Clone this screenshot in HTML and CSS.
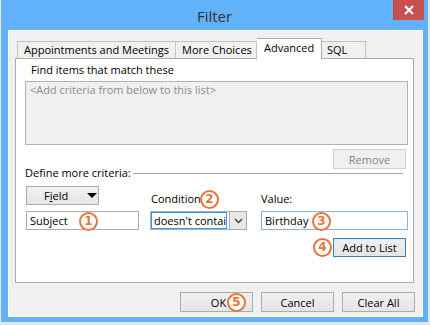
FILE: index.html
```html
<!DOCTYPE html>
<html lang="en">
<head>
    <meta charset="UTF-8">
    <title>Filter</title>
    <link rel="stylesheet" href="styles.css">
</head>
<body>
    <div class="window">
        <div class="titlebar">
            <span></span>
            <span class="title">Filter</span>
            <span class="close">
                <svg width="10" height="10" viewBox="0 0 10 10"><path d="M1 1 L9 9 M9 1 L1 9" stroke="#fff" stroke-width="2.2"/></svg>
            </span>
        </div>
        <div class="client">
            <div class="tabs">
                <div class="tab tab-appt">Appointments and Meetings</div>
                <div class="tab tab-more">More Choices</div>
                <div class="tab tab-adv active">Advanced</div>
                <div class="tab tab-sql">SQL</div>
            </div>
            <div class="panel">
                <div class="find-label">Find items that match these</div>
                <div class="criteria-list">
                    <span class="placeholder">&lt;Add criteria from below to this list&gt;</span>
                </div>
                <div class="remove-row">
                    <button class="btn disabled">Remove</button>
                </div>
                <div class="section-head">
                    <span>Define more criteria:</span>
                    <span class="rule"></span>
                </div>
                <div class="criteria-grid">
                    <button class="btn field-btn"><span>F<u>i</u>eld</span><span class="tri"></span></button>
                    <div class="label cond-label">Condition:<span class="step step-2">2</span></div>
                    <div class="label">Value:</div>

                    <div class="textbox subject">Subject<span class="step step-1">1</span></div>
                    <div class="combo">
                        <span class="combo-text">doesn't contai</span>
                        <span class="combo-btn">
                            <svg width="9" height="6" viewBox="0 0 9 6"><path d="M1 1 L4.5 4.5 L8 1" fill="none" stroke="#444" stroke-width="1.5"/></svg>
                        </span>
                    </div>
                    <div class="textbox value">Birthday<span class="step step-3">3</span></div>

                    <div class="add-cell">
                        <button class="btn default add-btn">Add to List<span class="step step-4">4</span></button>
                    </div>
                </div>
            </div>
            <div class="footer">
                <button class="btn ok-btn">OK<span class="step step-5">5</span></button>
                <button class="btn">Cancel</button>
                <button class="btn">Clear All</button>
            </div>
        </div>
    </div>
</body>
</html>
```

FILE: styles.css
```css
body {
    margin: 0;
    background: #e6e6e6;
    font-family: "Open Sans", "Noto Sans", sans-serif;
    font-size: 11px;
    color: #000;
}

.window {
    width: 427px;
    height: 322px;
    margin-left: 1px;
    padding: 0 5px 5px 7px;
    box-sizing: border-box;
    background: #62b1fb;
}

.titlebar {
    height: 30px;
    margin: 0 -5px 0 -7px;
    display: grid;
    grid-template-columns: 1fr auto 1fr;
    align-items: start;
}

.title {
    font-size: 15px;
    line-height: 32px;
    color: #333;
}

.close {
    justify-self: end;
    width: 31px;
    height: 20px;
    margin-right: 4px;
    background: #c75050;
    display: flex;
    align-items: center;
    justify-content: center;
}

.client {
    height: 287px;
    box-sizing: border-box;
    border: 1px solid #fbfdff;
    background: #f0f0f0;
    padding: 7px 0 0 6px;
}

/* tabs */
.tabs {
    display: flex;
    align-items: flex-end;
    height: 20px;
    padding-left: 2px;
}

.tab {
    height: 17px;
    box-sizing: border-box;
    border: 1px solid #c2c2c2;
    border-bottom: none;
    border-left: none;
    background: #f0f0f0;
    padding-left: 6px;
    line-height: 16px;
    white-space: nowrap;
}

.tab-appt { width: 159px; border-left: 1px solid #c2c2c2; }
.tab-more { width: 81px; }
.tab-adv { width: 65px; }
.tab-sql { width: 44px; padding-left: 5px; }

.tab.active {
    height: 21px;
    margin-bottom: -1px;
    background: #fff;
    border-color: #acacac;
    padding-left: 7px;
    line-height: 17px;
    position: relative;
}

/* panel */
.panel {
    width: 399px;
    height: 225px;
    box-sizing: border-box;
    border: 1px solid #acacac;
    background: #fff;
    padding: 3px 5px 0 9px;
}

.find-label {
    margin-left: 6px;
    line-height: 16px;
}

.criteria-list {
    height: 64px;
    margin-top: 3px;
    box-sizing: border-box;
    border: 1px solid #a7b5c6;
    background: #f0f0f0;
    padding: 1px 0 0 4px;
    line-height: 14px;
}

.placeholder {
    color: #8c8c8c;
}

.remove-row {
    display: flex;
    justify-content: flex-end;
    margin-top: 4px;
    padding-right: 2px;
}

.btn {
    width: 73px;
    height: 20px;
    box-sizing: border-box;
    border: 1px solid #acacac;
    background: linear-gradient(#f0f0f0, #e5e5e5);
    font-family: inherit;
    font-size: 11px;
    color: #000;
    padding: 0;
    position: relative;
}

.btn.disabled {
    color: #838383;
    border-color: #d0d0d0;
    background: #f0f0f0;
}

.btn.default {
    border-color: #3c7fb1;
    box-shadow: inset 0 0 0 1px #d7eaf9;
}

.section-head {
    display: flex;
    align-items: center;
    margin-top: -3px;
    line-height: 14px;
    padding-right: 5px;
}

.rule {
    flex: 1;
    height: 1px;
    margin-left: 2px;
    background: #a0a0a0;
}

/* criteria */
.criteria-grid {
    display: grid;
    grid-template-columns: 124px 111px 1fr;
    grid-template-rows: 19px 19px auto;
    row-gap: 6px;
    margin-top: 6px;
    margin-left: 1px;
}

.field-btn {
    height: 19px;
    display: flex;
    align-items: center;
    justify-content: flex-start;
    padding-left: 17px;
}

.tri {
    width: 0;
    height: 0;
    margin-left: 19px;
    border-left: 5px solid transparent;
    border-right: 5px solid transparent;
    border-top: 5px solid #000;
}

.label {
    align-self: end;
    line-height: 14px;
    margin-bottom: -1px;
    position: relative;
}

.cond-label {
    padding-left: 1px;
}

.textbox {
    height: 19px;
    box-sizing: border-box;
    border: 1px solid #acacac;
    background: #fff;
    padding-left: 3px;
    line-height: 17px;
    position: relative;
}

.subject {
    width: 113px;
}

.value {
    border-color: #8fb1d8;
}

.combo {
    width: 97px;
    height: 19px;
    box-sizing: border-box;
    border: 1px solid #acacac;
    background: #fff;
    display: flex;
}

.combo-text {
    flex: 1;
    border: 1px solid #3399ff;
    padding-left: 2px;
    line-height: 15px;
    white-space: nowrap;
}

.combo-btn {
    width: 16px;
    margin-left: 2px;
    border-left: 1px solid #acacac;
    background: #e8e8e8;
    display: flex;
    align-items: center;
    justify-content: center;
}

.add-cell {
    grid-column: 3;
    display: flex;
    justify-content: flex-end;
    padding-right: 2px;
    margin-top: 2px;
}

.add-btn {
    height: 19px;
}

/* numbered markers */
.step {
    position: absolute;
    width: 19px;
    height: 19px;
    box-sizing: border-box;
    border: 2px solid #e8753a;
    border-radius: 50%;
    background: #fff;
    color: #e8753a;
    font-family: "DejaVu Sans", sans-serif;
    font-weight: bold;
    font-size: 12px;
    line-height: 15px;
    text-align: center;
}

.step-1 { left: 52px; top: 0; }
.step-2 { left: 50px; top: -2px; }
.step-3 { left: 50px; top: 0; }
.step-4 { left: -21px; top: -1px; }
.step-5 { left: 46px; top: 0; }

/* footer */
.footer {
    display: flex;
    justify-content: flex-end;
    gap: 8px;
    margin-top: 9px;
    padding-right: 7px;
}

.ok-btn {
    padding-left: 4px;
}
```
